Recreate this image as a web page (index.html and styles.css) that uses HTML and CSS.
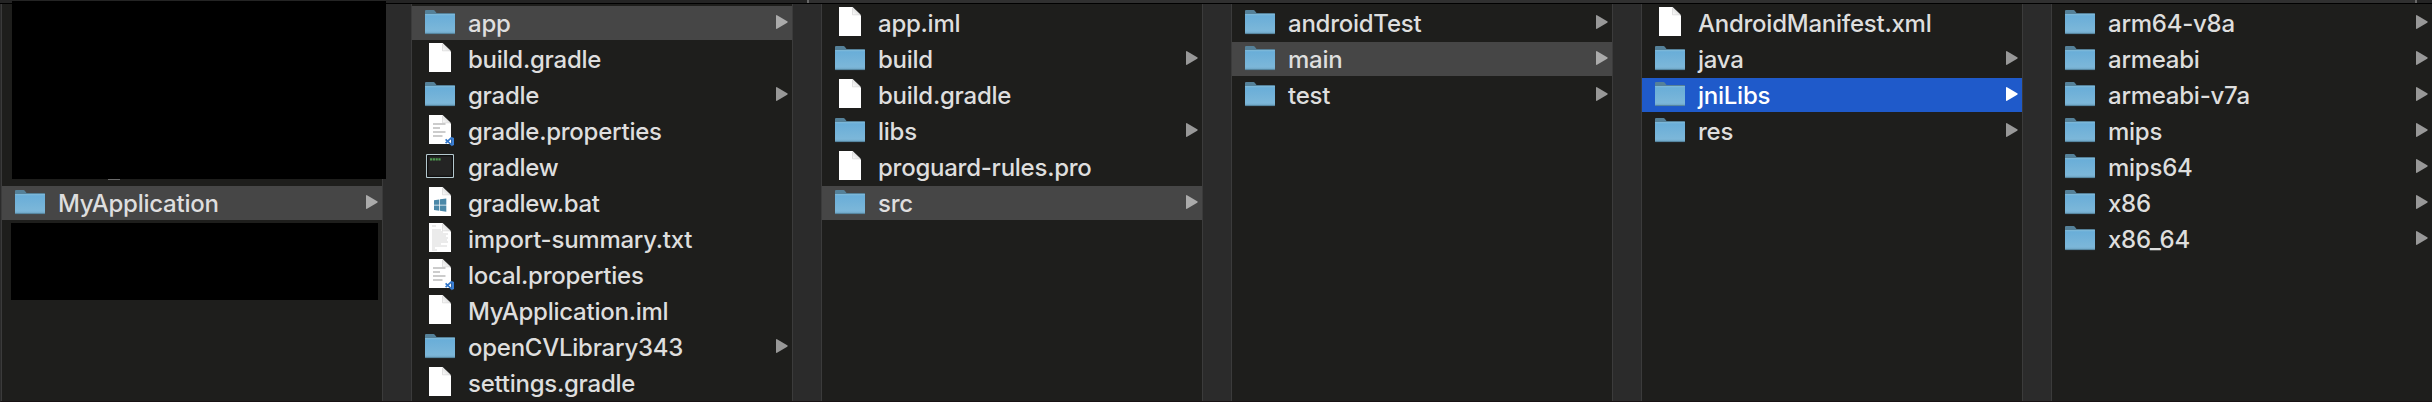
FILE: index.html
```
<!DOCTYPE html>
<html lang="en">
<head>
<meta charset="utf-8">
<title>Finder</title>
<link rel="stylesheet" href="styles.css">
</head>
<body>
<svg class="defs" width="0" height="0">
  <defs>
    <linearGradient id="front" x1="0" y1="0" x2="0" y2="1">
      <stop offset="0" stop-color="#68add8"/>
      <stop offset="0.85" stop-color="#7cb7d9"/>
      <stop offset="1" stop-color="#6a9fbd"/>
    </linearGradient>
    <linearGradient id="fold" x1="0" y1="1" x2="1" y2="0">
      <stop offset="0" stop-color="#ffffff"/>
      <stop offset="1" stop-color="#c4c4c4"/>
    </linearGradient>
    <symbol id="folder" viewBox="0 0 32 34">
      <path d="M1 6V5Q1 4 2 4H9.500Q10.300 4 11 5L12.500 7H30.500Q31 7 31 8V12H1Z" fill="#558199"/>
      <rect x="1" y="8.500" width="30" height="19.500" rx="0.800" fill="url(#front)"/>
      <rect x="1" y="8.200" width="30" height="1" fill="#83bfe0"/>
      <rect x="1.300" y="27.300" width="29.400" height="0.800" fill="#4f7b93"/>
    </symbol>
    <symbol id="sheet" viewBox="0 0 32 34">
      <path d="M5 1H18.500L27 9.500V30H5Z" fill="#fff"/>
      <path d="M18.500 1V8.800H26.800Z" fill="url(#fold)"/>
      <path d="M18.500 2V8.800H26" fill="none" stroke="#cfcfcf" stroke-width="0.600"/>
    </symbol>
    <symbol id="props" viewBox="0 0 32 34">
      <use href="#sheet"/>
      <path d="M9 10H21.500M9 14H16M9 18H21.500M9 22H18.500" stroke="#bcbcbc" stroke-width="1.500"/>
      <path d="M27.600 23.600L21.600 29.200M21.600 25.400L27.600 31" stroke="#2f75ca" stroke-width="1.700" fill="none"/>
      <path d="M27.300 22.800L30 24V31L27.300 32.200Z" fill="#397fd6"/>
    </symbol>
    <symbol id="exec" viewBox="0 0 32 34">
      <rect x="2.600" y="4.600" width="26.800" height="22.800" rx="0.500" fill="#252525" stroke="#b4c8ce" stroke-width="1.200"/>
      <rect x="3.700" y="5.700" width="24.600" height="20.600" fill="#242424" stroke="#050505"/>
      <path d="M6 9.400H17" stroke="#4f9a50" stroke-width="2.400" stroke-dasharray="2.200 .6"/>
    </symbol>
    <symbol id="bat" viewBox="0 0 32 34">
      <use href="#sheet"/>
      <path d="M10 14.200L15.300 13.400V18.700H10ZM16 13.300L22.300 12.400V18.700H16ZM10 19.400H15.300V24.700L10 24ZM16 19.400H22.300V25.700L16 24.800Z" fill="#4b88a8"/>
    </symbol>
    <symbol id="txt" viewBox="0 0 32 34">
      <use href="#sheet"/>
      <path d="M8 4H12M8 8H17M8 10H19M8 12H24M8 14H22M8 16H24M8 18H23M8 20H24M8 22H17M8 24H23M8 26H11M8 28H13" stroke="#c5c5c5" stroke-width="0.700"/>
    </symbol>
    <symbol id="arrow" viewBox="0 0 12 16">
      <path d="M1 1.200L11.200 7.300Q12.200 8 11.200 8.700L1 14.800Q0 15.200 0 14.200V1.800Q0 0.800 1 1.200Z" fill="currentColor"/>
    </symbol>
  </defs>
</svg>
<div class="strip"><i class="tick"></i><i class="tick"></i></div>
<main class="browser" id="browser"></main>
<script src="app.js"></script>
</body>
</html>
```
FILE: styles.css
```
body {
  margin: 0;
  background: #1e1e1c;
  font-family: Inter, Roboto, sans-serif;
  overflow: hidden;
}
.defs { position: absolute; }
.strip {
  display: grid;
  grid-template-columns: 807px 1608px;
  height: 3px;
  border-bottom: 1px solid #000;
  background: linear-gradient(90deg, #242424 807px, #303030 807px 2415px, #242424 2415px);
}
.strip .tick { grid-row: 1; width: 2px; height: 3px; background: #696969; }
.strip .tick:first-child { grid-column: 2; }
.strip .tick:last-child { grid-column: 3; }
.browser {
  box-sizing: border-box;
  display: flex;
  height: 398px;
  border-left: 1px solid #2b2b2b;
  border-bottom: 1px solid #181214;
}
.column {
  flex: none;
  box-sizing: border-box;
  width: 382px;
  padding-top: 2px;
  border: 1px solid #3b3b3b;
  border-width: 0 1px;
  display: flex;
  flex-direction: column;
  gap: 2px;
}
.gutter { flex: none; width: 28px; background: #2b2b2b; }
.row {
  flex: none;
  display: flex;
  height: 34px;
  padding: 0 4px 0 12px;
  color: #dedede;
}
.row.open { background: #464646; }
.row.active { background: #1f5aca; color: #fff; }
.icon { width: 32px; height: 34px; flex: none; }
.name {
  flex: 1;
  margin-left: 12px;
  font-size: 24px;
  font-weight: 500;
  letter-spacing: -0.25px;
  line-height: 36px;
  white-space: pre;
}
.arrow { width: 12px; height: 16px; margin-top: 8px; color: #989898; }
.open .arrow { color: #ababab; }
.active .arrow { color: #fff; }
.redacted { position: relative; flex: none; background: #000; }
.redacted.upper { width: 374px; height: 178px; margin: -5px 0 5px 10px; z-index: 1; }
.redacted.lower { width: 367px; height: 77px; margin: 1px 0 0 9px; }
.remnant { position: absolute; left: 96px; bottom: -1px; width: 12px; height: 1px; background: #6b6b6b; }
```
FILE: app.js
```
const columns = [
  [['folder', 'MyApplication', 'open']],
  [['folder', 'app', 'open'], ['sheet', 'build.gradle'], ['folder', 'gradle'], ['props', 'gradle.properties'],
   ['exec', 'gradlew'], ['bat', 'gradlew.bat'], ['txt', 'import-summary.txt'], ['props', 'local.properties'],
   ['sheet', 'MyApplication.iml'], ['folder', 'openCVLibrary343'], ['sheet', 'settings.gradle']],
  [['sheet', 'app.iml'], ['folder', 'build'], ['sheet', 'build.gradle'], ['folder', 'libs'],
   ['sheet', 'proguard-rules.pro'], ['folder', 'src', 'open']],
  [['folder', 'androidTest'], ['folder', 'main', 'open'], ['folder', 'test']],
  [['sheet', 'AndroidManifest.xml'], ['folder', 'java'], ['folder', 'jniLibs', 'active'], ['folder', 'res']],
  [['folder', 'arm64-v8a'], ['folder', 'armeabi'], ['folder', 'armeabi-v7a'], ['folder', 'mips'],
   ['folder', 'mips64'], ['folder', 'x86'], ['folder', 'x86_64']]
];

const row = ([icon, name, state = '']) =>
  `<div class="row ${state}"><svg class="icon"><use href="#${icon}"/></svg><span class="name">${name}</span>` +
  (icon === 'folder' ? '<svg class="arrow"><use href="#arrow"/></svg>' : '') + '</div>';

document.getElementById('browser').innerHTML = columns.map((rows, i) => {
  const list = rows.map(row).join('');
  const body = i ? list
    : `<div class="redacted upper"><i class="remnant"></i></div>${list}<div class="redacted lower"></div>`;
  return `<section class="column">${body}</section>`;
}).join('<div class="gutter"></div>');
```
